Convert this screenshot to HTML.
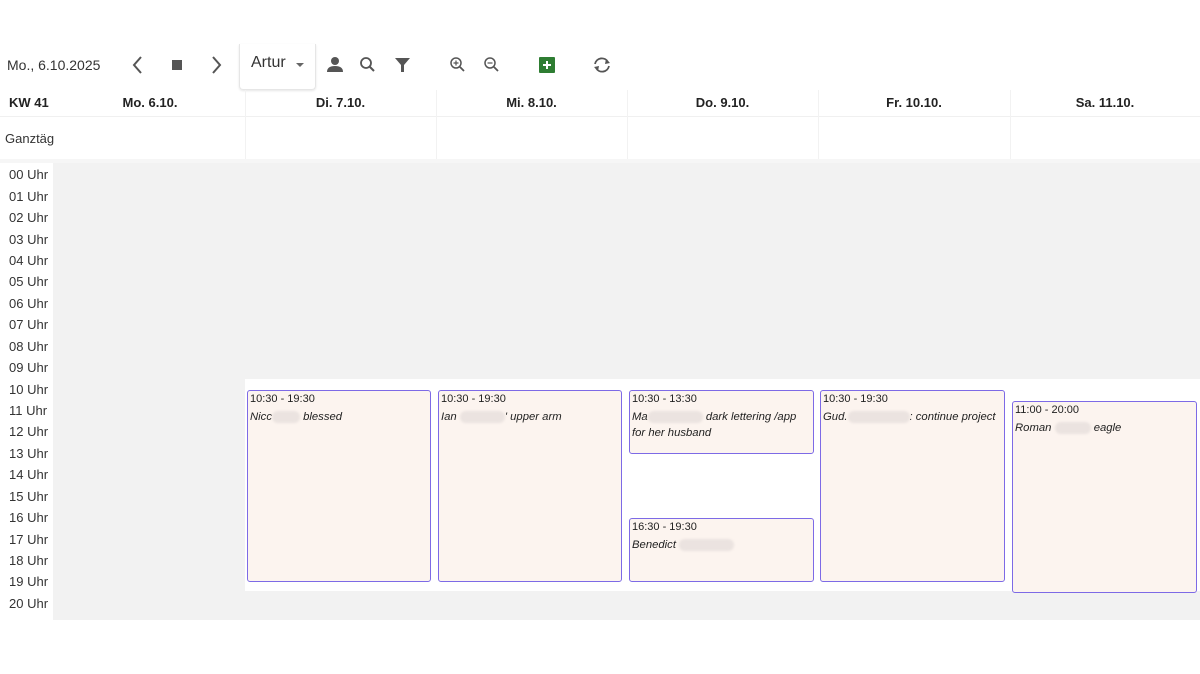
<!DOCTYPE html>
<html><head><meta charset="utf-8"><style>
*{margin:0;padding:0;box-sizing:border-box}
body{width:1200px;height:674px;background:#fff;font-family:"Liberation Sans",sans-serif;color:#222;position:relative;overflow:hidden}
.a{position:absolute}
.hd{font-weight:bold;font-size:13px;top:95px}
.hr{left:9px;font-size:13px;color:#333}
.ev{position:absolute;background:#fcf4ef;border:1.6px solid #7d6ae6;border-radius:3px;font-size:11px;padding:2px 2px}
.ev i{display:block;margin-top:4px;line-height:16px;font-size:11.3px}
.bl{display:inline-block;background:#ebe3e0;border-radius:6px;height:12px;vertical-align:middle;filter:blur(1px)}
.sep{position:absolute;top:90px;height:70px;width:1px;background:#f2f2f2}
</style></head><body>
<div class="a" style="left:7px;top:57px;font-size:14px;color:#333">Mo., 6.10.2025</div>
<svg class="a" style="left:128px;top:54px" width="100" height="22" viewBox="0 0 100 22"><path d="M13 3 L6 11 L13 19" stroke="#555" stroke-width="2" fill="none"/><rect x="44" y="6" width="10" height="10" fill="#555"/><path d="M85 3 L92 11 L85 19" stroke="#555" stroke-width="2" fill="none"/></svg>
<div class="a" style="left:239px;top:44px;width:77px;height:46px;border:1px solid #e6e6e6;border-top:none;border-radius:0 0 4px 4px;box-shadow:0 1px 2px rgba(0,0,0,.1)"></div>
<div class="a" style="left:251px;top:54px;font-size:16px;color:#333">Artur</div>
<div class="a" style="left:296px;top:63px;border:4px solid transparent;border-top:4px solid #666"></div>
<svg class="a" style="left:320px;top:52px" width="300" height="26" viewBox="0 0 300 26">
<circle cx="15" cy="9" r="4" fill="#555"/><path d="M7 20 Q7 14 15 14 Q23 14 23 20Z" fill="#555"/>
<circle cx="46" cy="11" r="5" stroke="#555" stroke-width="1.8" fill="none"/><path d="M50 15 L54 19" stroke="#555" stroke-width="2"/>
<path d="M75 6 H90 L84 13 V20 L81 20 V13Z" fill="#555"/>
<circle cx="136" cy="11" r="5" stroke="#555" stroke-width="1.5" fill="none"/><path d="M140 15 L144 19" stroke="#555" stroke-width="1.8"/><path d="M133.5 11 H138.5 M136 8.5 V13.5" stroke="#555" stroke-width="1.2"/>
<circle cx="170" cy="11" r="5" stroke="#555" stroke-width="1.5" fill="none"/><path d="M174 15 L178 19" stroke="#555" stroke-width="1.8"/><path d="M167.5 11 H172.5" stroke="#555" stroke-width="1.2"/>
<rect x="219" y="5" width="16" height="16" rx="1" fill="#2e7d32"/><path d="M227 9 V17 M223 13 H231" stroke="#fff" stroke-width="2"/>
<path d="M275 12 A7 7 0 0 1 288 10 M289 14 A7 7 0 0 1 276 16" stroke="#555" stroke-width="1.8" fill="none"/><path d="M286 7 L290 11 L285 12Z M278 19 L274 15 L279 14Z" fill="#555"/>
</svg>
<div class="a hd" style="left:9px">KW 41</div>
<div class="a hd" style="left:55px;width:190px;text-align:center">Mo. 6.10.</div>
<div class="a hd" style="left:245px;width:191px;text-align:center">Di. 7.10.</div>
<div class="a hd" style="left:436px;width:191px;text-align:center">Mi. 8.10.</div>
<div class="a hd" style="left:627px;width:191px;text-align:center">Do. 9.10.</div>
<div class="a hd" style="left:818px;width:192px;text-align:center">Fr. 10.10.</div>
<div class="a hd" style="left:1010px;width:190px;text-align:center">Sa. 11.10.</div>
<div class="a" style="left:0;top:116px;width:1200px;height:1px;background:#f0f0f0"></div>
<div class="sep" style="left:245px"></div><div class="sep" style="left:436px"></div><div class="sep" style="left:627px"></div><div class="sep" style="left:818px"></div><div class="sep" style="left:1010px"></div>
<div class="a" style="left:5px;top:131px;font-size:13px;width:49px;overflow:hidden;white-space:nowrap;color:#333">Ganztägig</div>
<div class="a" style="left:0;top:159px;width:1200px;height:4px;background:#f6f6f6"></div>
<div class="a" style="left:53px;top:163px;width:1147px;height:457px;background:#f2f2f2"></div>
<div class="a" style="left:245px;top:379px;width:955px;height:212px;background:#fff"></div>
<div class="a hr" style="top:167px">00 Uhr</div><div class="a hr" style="top:189px">01 Uhr</div><div class="a hr" style="top:210px">02 Uhr</div><div class="a hr" style="top:232px">03 Uhr</div><div class="a hr" style="top:253px">04 Uhr</div><div class="a hr" style="top:274px">05 Uhr</div><div class="a hr" style="top:296px">06 Uhr</div><div class="a hr" style="top:317px">07 Uhr</div><div class="a hr" style="top:339px">08 Uhr</div><div class="a hr" style="top:360px">09 Uhr</div><div class="a hr" style="top:382px">10 Uhr</div><div class="a hr" style="top:403px">11 Uhr</div><div class="a hr" style="top:424px">12 Uhr</div><div class="a hr" style="top:446px">13 Uhr</div><div class="a hr" style="top:467px">14 Uhr</div><div class="a hr" style="top:489px">15 Uhr</div><div class="a hr" style="top:510px">16 Uhr</div><div class="a hr" style="top:532px">17 Uhr</div><div class="a hr" style="top:553px">18 Uhr</div><div class="a hr" style="top:574px">19 Uhr</div><div class="a hr" style="top:596px">20 Uhr</div>
<div class="ev" style="left:247px;top:390px;width:184px;height:192px">10:30 - 19:30<i>Nicc<span class="bl" style="width:28px"></span> blessed</i></div>
<div class="ev" style="left:438px;top:390px;width:184px;height:192px">10:30 - 19:30<i>Ian <span class="bl" style="width:45px"></span>' upper arm</i></div>
<div class="ev" style="left:629px;top:390px;width:185px;height:64px">10:30 - 13:30<i>Ma<span class="bl" style="width:55px"></span> dark lettering /app<br>for her husband</i></div>
<div class="ev" style="left:629px;top:518px;width:185px;height:64px">16:30 - 19:30<i>Benedict <span class="bl" style="width:55px"></span></i></div>
<div class="ev" style="left:820px;top:390px;width:185px;height:192px">10:30 - 19:30<i>Gud.<span class="bl" style="width:62px"></span>: continue project</i></div>
<div class="ev" style="left:1012px;top:401px;width:185px;height:192px">11:00 - 20:00<i>Roman <span class="bl" style="width:36px"></span> eagle</i></div>
</body></html>
